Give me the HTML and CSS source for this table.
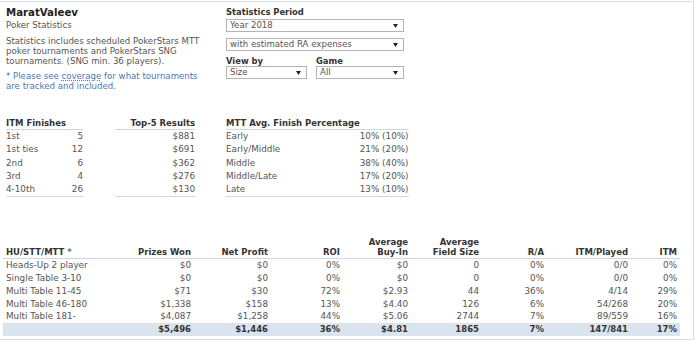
FILE: index.html
```html
<!DOCTYPE html>
<html>
<head>
<meta charset="utf-8">
<link rel="stylesheet" href="styles.css">
</head>
<body>
<div class="page">
  <div class="top">
    <div class="intro">
      <h1 class="name">MaratValeev</h1>
      <div class="sub">Poker Statistics</div>
      <p class="desc">Statistics includes scheduled PokerStars MTT<br>poker tournaments and PokerStars SNG<br>tournaments. (SNG min. 36 players).</p>
      <p class="note">* Please see <span class="dotted">coverage</span> for what tournaments<br>are tracked and included.</p>
    </div>
    <div class="filters">
      <div class="label">Statistics Period</div>
      <div class="select wide"><span>Year 2018</span><svg class="arrow" width="5" height="4" viewBox="0 0 5 4"><path d="M0 0H5L2.5 4Z"/></svg></div>
      <div class="select wide gap"><span>with estimated RA expenses</span><svg class="arrow" width="5" height="4" viewBox="0 0 5 4"><path d="M0 0H5L2.5 4Z"/></svg></div>
      <div class="pair">
        <div class="field">
          <div class="label">View by</div>
          <div class="select size"><span>Size</span><svg class="arrow" width="5" height="4" viewBox="0 0 5 4"><path d="M0 0H5L2.5 4Z"/></svg></div>
        </div>
        <div class="field">
          <div class="label">Game</div>
          <div class="select game"><span>All</span><svg class="arrow" width="5" height="4" viewBox="0 0 5 4"><path d="M0 0H5L2.5 4Z"/></svg></div>
        </div>
      </div>
    </div>
  </div>

  <div class="summary">
    <table class="mini itm">
      <thead><tr><th>ITM Finishes</th><th></th></tr></thead>
      <tbody>
        <tr><td>1st</td><td class="num">5</td></tr>
        <tr><td>1st ties</td><td class="num">12</td></tr>
        <tr><td>2nd</td><td class="num">6</td></tr>
        <tr><td>3rd</td><td class="num">4</td></tr>
        <tr><td>4-10th</td><td class="num">26</td></tr>
      </tbody>
    </table>
    <table class="mini top5">
      <thead><tr><th class="num">Top-5 Results</th></tr></thead>
      <tbody>
        <tr><td class="num">$881</td></tr>
        <tr><td class="num">$691</td></tr>
        <tr><td class="num">$362</td></tr>
        <tr><td class="num">$276</td></tr>
        <tr><td class="num">$130</td></tr>
      </tbody>
    </table>
    <table class="mini finish">
      <thead><tr><th>MTT Avg. Finish Percentage</th><th></th></tr></thead>
      <tbody>
        <tr><td>Early</td><td class="num">10% (10%)</td></tr>
        <tr><td>Early/Middle</td><td class="num">21% (20%)</td></tr>
        <tr><td>Middle</td><td class="num">38% (40%)</td></tr>
        <tr><td>Middle/Late</td><td class="num">17% (20%)</td></tr>
        <tr><td>Late</td><td class="num">13% (10%)</td></tr>
      </tbody>
    </table>
  </div>

  <table class="results">
    <colgroup>
      <col class="c-type"><col class="c-prize"><col class="c-net"><col class="c-roi"><col class="c-buy"><col class="c-field"><col class="c-ra"><col class="c-played"><col class="c-itm">
    </colgroup>
    <thead>
      <tr>
        <th class="lbl">HU/STT/MTT <span class="star">*</span></th>
        <th>Prizes Won</th>
        <th>Net Profit</th>
        <th>ROI</th>
        <th>Average<br>Buy-In</th>
        <th>Average<br>Field Size</th>
        <th>R/A</th>
        <th>ITM/Played</th>
        <th>ITM</th>
      </tr>
    </thead>
    <tbody>
      <tr><td class="lbl">Heads-Up 2 player</td><td>$0</td><td>$0</td><td>0%</td><td>$0</td><td>0</td><td>0%</td><td>0/0</td><td>0%</td></tr>
      <tr><td class="lbl">Single Table 3-10</td><td>$0</td><td>$0</td><td>0%</td><td>$0</td><td>0</td><td>0%</td><td>0/0</td><td>0%</td></tr>
      <tr><td class="lbl">Multi Table 11-45</td><td>$71</td><td>$30</td><td>72%</td><td>$2.93</td><td>44</td><td>36%</td><td>4/14</td><td>29%</td></tr>
      <tr><td class="lbl">Multi Table 46-180</td><td>$1,338</td><td>$158</td><td>13%</td><td>$4.40</td><td>126</td><td>6%</td><td>54/268</td><td>20%</td></tr>
      <tr><td class="lbl">Multi Table 181-</td><td>$4,087</td><td>$1,258</td><td>44%</td><td>$5.06</td><td>2744</td><td>7%</td><td>89/559</td><td>16%</td></tr>
    </tbody>
    <tfoot>
      <tr><td class="lbl"></td><td>$5,496</td><td>$1,446</td><td>36%</td><td>$4.81</td><td>1865</td><td>7%</td><td>147/841</td><td>17%</td></tr>
    </tfoot>
  </table>
</div>
</body>
</html>
```

FILE: styles.css
```css
html, body {
  margin: 0;
  padding: 0;
  background: #fff;
}

body {
  font-family: "DejaVu Sans", Verdana, sans-serif;
  font-size: 8.6px;
  color: #444;
}

.page {
  box-sizing: border-box;
  width: 694px;
  height: 339px;
  margin-top: 1px;
  border-top: 1px solid #d6dfe8;
  border-right: 1px solid #d6dfe8;
  border-bottom: 1px solid #d6dfe8;
}

.top {
  display: flex;
  padding: 4px 0 0 6px;
}

.intro {
  width: 214px;
  margin-right: 6px;
  white-space: nowrap;
}

.name {
  margin: 0;
  font-size: 10.2px;
  line-height: 14px;
  font-weight: bold;
  color: #222;
}

.sub {
  line-height: 10px;
  color: #555;
}

.desc {
  margin: 6px 0 0;
  font-size: 8.6px;
  line-height: 10px;
  color: #555;
}

.note {
  margin: 5px 0 0;
  font-size: 8.6px;
  line-height: 10px;
  color: #4a78b8;
}

.dotted {
  text-decoration: underline dotted #4a78b8;
  text-underline-offset: 1px;
}

.filters {
  padding-top: 1px;
}

.label {
  font-weight: bold;
  font-size: 8.4px;
  color: #333;
  line-height: 10px;
}

.select {
  box-sizing: border-box;
  height: 13px;
  margin-top: 2px;
  border: 1px solid #b4b4b4;
  display: flex;
  align-items: center;
  justify-content: space-between;
  padding: 0 5px 0 3px;
  color: #555;
  line-height: 11px;
  background: #fff;
}

.select.gap {
  margin-top: 6px;
}

.arrow {
  fill: #222;
  display: block;
}

.wide { width: 178px; }
.size { width: 81px; margin-top: 0; }
.game { width: 88px; margin-top: 0; }

.pair {
  display: flex;
  gap: 9px;
  margin-top: 5px;
}

.summary {
  display: flex;
  align-items: flex-start;
  padding-left: 6px;
  margin-top: 27px;
}

.mini {
  border-collapse: collapse;
  border-bottom: 1px solid #cfd8e1;
  font-size: 8.8px;
}

.mini th {
  font-weight: bold;
  font-size: 8.5px;
  color: #333;
  text-align: left;
  padding: 0;
  height: 11px;
  line-height: 11px;
  border-bottom: 1px solid #cfd8e1;
  white-space: nowrap;
}

.mini td {
  padding: 0;
  height: 13.3px;
  line-height: 13.3px;
  color: #555;
  white-space: nowrap;
}

.mini .num { text-align: right; }

.itm { width: 77px; }
.top5 { width: 80px; margin-left: 32px; }
.finish { width: 170px; margin-left: 31px; }

.results {
  border-collapse: collapse;
  table-layout: fixed;
  width: 677px;
  margin: 40px 0 0 3px;
  font-size: 8.8px;
}

.c-type { width: 117px; }
.c-prize { width: 71px; }
.c-net { width: 77px; }
.c-roi { width: 72px; }
.c-buy { width: 68px; }
.c-field { width: 71px; }
.c-ra { width: 65px; }
.c-played { width: 84px; }
.c-itm { width: 52px; }

.results th {
  font-weight: bold;
  font-size: 8.5px;
  color: #333;
  text-align: right;
  vertical-align: bottom;
  padding: 0 0 1px;
  line-height: 10px;
  border-bottom: 1px solid #cfd8e1;
  white-space: nowrap;
}

.results td {
  text-align: right;
  padding: 0;
  height: 12.7px;
  line-height: 12.7px;
  color: #555;
  white-space: nowrap;
}

.results th:last-child,
.results td:last-child {
  padding-right: 3px;
}

.results .lbl {
  text-align: left;
  padding-left: 3px;
}

.star { color: #4a78b8; }

.results tfoot td {
  background: #d9e4ef;
  font-weight: bold;
  font-size: 8.5px;
  color: #333;
}
```
